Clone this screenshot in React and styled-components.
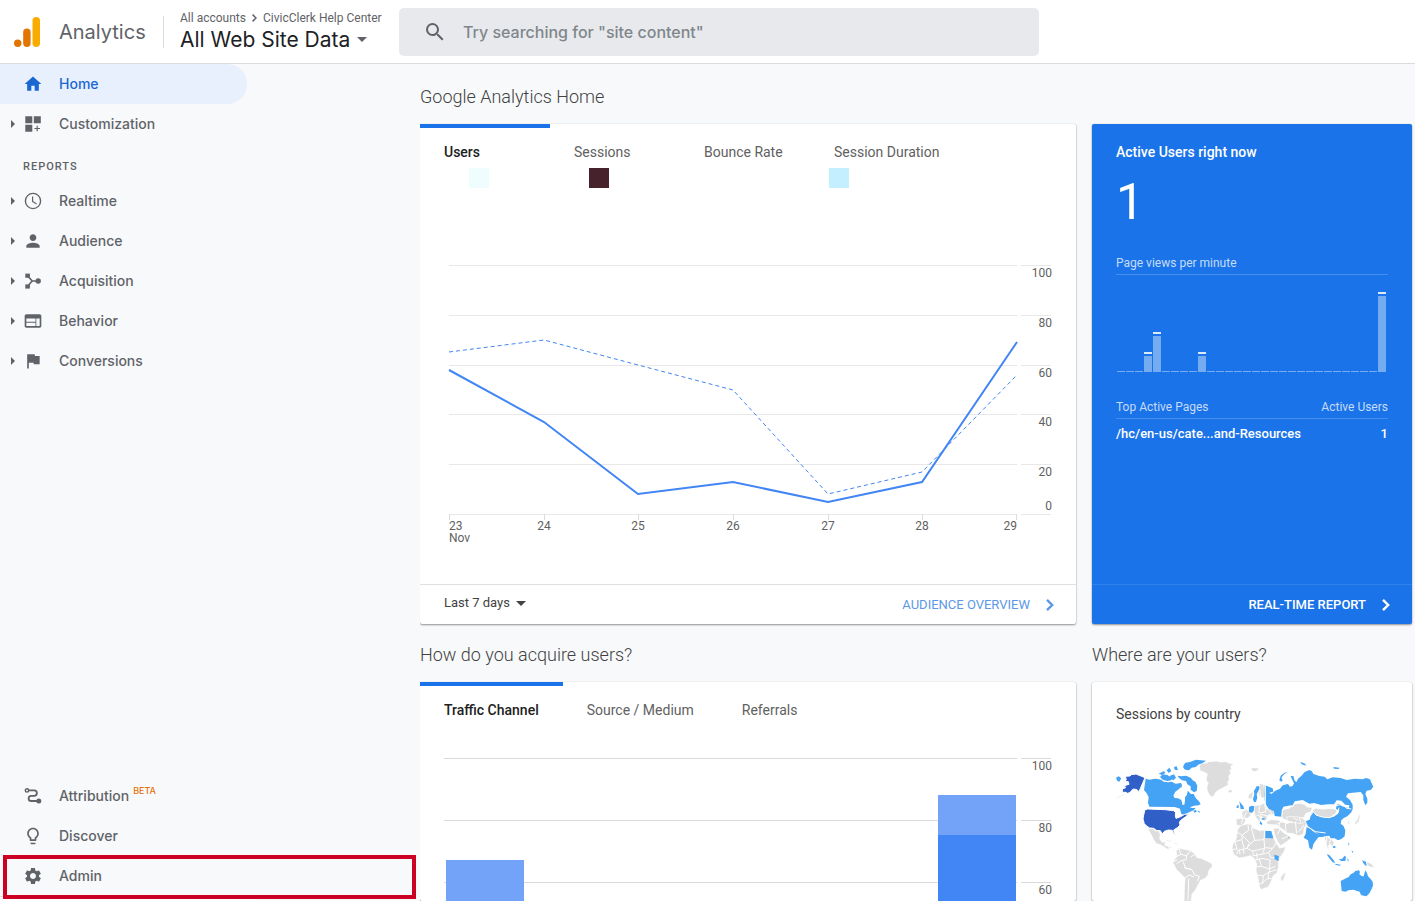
import React, { useState } from 'react';
import styled, { createGlobalStyle } from 'styled-components';
import { MdHome, MdPerson, MdFlag, MdSettings, MdWeb, MdSearch, MdLightbulbOutline } from 'react-icons/md';

const brandFont = `'Google Sans', Inter, Roboto, sans-serif`;

const LogoIcon = () => (
  <svg width="28" height="32" viewBox="0 0 28 32" aria-hidden="true">
    <rect x="18.5" y="1" width="7.5" height="30" rx="3.7" fill="#f9ab00" />
    <rect x="9.2" y="12.6" width="7.4" height="18.4" rx="3.7" fill="#e37400" />
    <circle cx="3.7" cy="27.2" r="3.7" fill="#e37400" />
  </svg>
);

const CustomizationIcon = () => (
  <svg width="20" height="20" viewBox="0 0 20 20" fill="currentColor">
    <path d="M2.3 2.3h7v6.9h-7zM10.8 2.3h7v6.9h-7zM2.3 10.7h7v7h-7zM13.6 11.7h1.2v2.2H17v1.2h-2.2v2.2h-1.2v-2.2h-2.2v-1.2h2.2z" />
  </svg>
);

const ClockIcon = () => (
  <svg width="20" height="20" viewBox="0 0 20 20" fill="none" stroke="currentColor">
    <circle cx="10" cy="10" r="7.6" strokeWidth="1.4" />
    <path d="M9.6 5.5v5l4 2.4" strokeWidth="1.2" />
  </svg>
);

const AcquisitionIcon = () => (
  <svg width="20" height="20" viewBox="0 0 20 20" fill="currentColor">
    <rect x="2.3" y="2.6" width="4.6" height="4.2" />
    <rect x="2.3" y="13.4" width="4.6" height="4.2" />
    <circle cx="15.2" cy="10" r="2.7" />
    <path d="M4.8 5l4.4 5-4.4 5M9.2 10h5" fill="none" stroke="currentColor" strokeWidth="1.6" />
  </svg>
);

const AttributionIcon = () => (
  <svg width="20" height="20" viewBox="0 0 20 20" fill="none" stroke="currentColor">
    <circle cx="4" cy="4.4" r="1.7" strokeWidth="1.5" />
    <path d="M5.8 4.4h5.4a2.7 2.7 0 0 1 0 5.4H8.2a2.6 2.6 0 0 0 0 5.2h7" strokeWidth="1.8" />
    <circle cx="15.8" cy="15" r="2.5" fill="currentColor" stroke="none" />
  </svg>
);

const Chevron = () => (
  <svg width="10" height="14" viewBox="0 0 10 14" fill="none" stroke="currentColor" strokeWidth="2.4">
    <path d="M2 1.8L7.2 7 2 12.2" />
  </svg>
);

const reports = [
  { label: 'Realtime', icon: <ClockIcon /> },
  { label: 'Audience', icon: <MdPerson /> },
  { label: 'Acquisition', icon: <AcquisitionIcon /> },
  { label: 'Behavior', icon: <MdWeb /> },
  { label: 'Conversions', icon: <MdFlag /> },
];

const swatches = ['#f0fdff', '#45222c', 'transparent', '#c4effe'];

const pageViews = Array.from({ length: 30 }, () => 0);
pageViews[3] = 16;
pageViews[4] = 36;
pageViews[9] = 16;
pageViews[29] = 76;

const days = [
  { x: 29, label: '23', anchor: 'start' },
  { x: 124, label: '24', anchor: 'middle' },
  { x: 218, label: '25', anchor: 'middle' },
  { x: 313, label: '26', anchor: 'middle' },
  { x: 408, label: '27', anchor: 'middle' },
  { x: 502, label: '28', anchor: 'middle' },
  { x: 597, label: '29', anchor: 'end' },
];

const userLines = [
  { y: 77, label: '100' },
  { y: 127, label: '80' },
  { y: 177, label: '60' },
  { y: 226, label: '40' },
  { y: 276, label: '20' },
  { y: 326, label: '0' },
];

const UsersChart = () => (
  <Chart viewBox="0 0 656 396" role="img" aria-label="Users, last 7 days">
    {userLines.map(({ y, label }) => (
      <g key={label}>
        <path d={`M29 ${y}.5H597M601 ${y}.5H631`} stroke="#e8e8e8" />
        <text x="632" y={label === '0' ? 322 : y + 12} textAnchor="end">{label}</text>
      </g>
    ))}
    {days.map(({ x, label, anchor }) => (
      <g key={label}>
        <path d={`M${anchor === 'end' ? x - 1 : x}.5 326v6`} stroke="#dcdcdc" />
        <text x={x} y="342" textAnchor={anchor}>{label}</text>
      </g>
    ))}
    <text x="29" y="354">Nov</text>
    <polyline points="29,164 124,152 218,177 313,202 408,306 502,284 597,187" fill="none" stroke="#4285f4" strokeDasharray="4 3" />
    <polyline points="29,182 124,234 218,306 313,294 408,314 502,294 597,154" fill="none" stroke="#4285f4" strokeWidth="2" />
  </Chart>
);

const TrafficChart = () => (
  <Chart viewBox="0 0 656 175" role="img" aria-label="Traffic channel">
    {[100, 80, 60].map((value, i) => (
      <g key={value}>
        <path d={`M24 ${32 + i * 62}.5H597M601 ${32 + i * 62}.5H631`} stroke="#dadada" />
        <text x="632" y={44 + i * 62} textAnchor="end">{value}</text>
      </g>
    ))}
    <rect x="26" y="134" width="78" height="41" fill="#72a3f8" />
    <rect x="518" y="69" width="78" height="40" fill="#72a3f8" />
    <rect x="518" y="109" width="78" height="66" fill="#4285f4" />
  </Chart>
);

const land = [
  // Greenland, Iceland, Svalbard
  'M298 60l10-5 12-1 6-4 24-2 10 3 18-1 8 4 16 4-10 6 3 8-6 4 4 9-7 8 2 12-5 5 2 10-17 9-12 6-9 7-5 11-8 3-8-10-5-12 0-10 4-10-7-9 2-8 2-10-10-6-12-4z',
  'M383 137l8-3 8 3-3 5-8 2z M452 70l12-2 14 2-8 8-10 2z',
  // Mexico and Central America
  'M143 250l16 1 8 7 8-1 6 11-2 14 8 10 10-2-3 11 11 3 3 11-10-5-14-9-16-6-6-9-6-12z',
  // South America
  'M228 318l10-8 14 3 18 3 13 9 8 13 12 2 18 8 15 8 1 8-10 12-3 14-8 10-14 6-8 14-8 16-10 11-4 30h-20l1-40 2-38-12-12-14-14-10-20 4-9 8-10z',
  // Europe
  'M443 160l4-12 12-8 10-14 12-10 10 2 2 14 4 20-6 7-10-2-6-10 2-12-8-6-8 10-6 24-8-4z',
  'M408 222l22-2 8 4-6 12-8 6-14-1z M426 200l14-6 10 6 2 12-10 8-14-2-2-10z',
  'M464 182l16-2 14-6 12 6 18 20-4 12-10-4-10 6 2 8-10 6-6-12-4-4-2 12 6 12-14-12-6-10-4-16z',
  'M499 230l14-6 26 2 4 8-14 6-28-2z',
  // Middle East and Central Asia
  'M541 206l6-12 22-4 4-11 24-4 16 3 8 8 16 2-4 12-16 6-6 12-18 2-20-2-14 8-12-6z',
  'M528 238l18-8 14 6 28-10 24 2 8 8-8 14-2 18-14 4-16-6-18-2-10-8z',
  'M520 250l16 0 16 14 14 8 8 8-16 12-16 10-8-10-10-22z',
  'M560 216l26-2 22 6 10 8-14 8-24-4-18-4z',
  // Korea and Japan
  'M744 222l4 10 2 8-6-4z M778 202l2 14-4 14-10 10-2-6 8-10z',
  // South-east Asia
  'M672 272l8-4 6 12 8 2 8 10-4 14-6-8-6 2 0 14 8 10-6-2-6-14-6-20z',
  'M800 350l14 6 10 12-12-2-10-4z',
  // Africa
  'M413 253l10-12 20-4 12 2 2 10 14 4 6 4 16-2 20 4 6 16 10 20 10 14 18-4-4 14-14 20-4 12 0 18-4 14-12 10-6 18-8 14-22 9-5-10-4-26-6-22 2-20-8-16-10-8-16 4-18 3-16-10-6-16 2-14 10-16z',
  'M557 380l-2 12-6 16-6-1-1-10 6-8z',
];

const borders = [
  'M412 262l14 8 0 14-22 6-16 8M426 270l20-14-2-16M426 270l26 26 12-10-10-38M464 286l28-2 2-28M492 284l2 24 24 2 10-16M452 296l-12 14-26 6-4 12M440 310l18 8 36-8M458 318l2 14 26-4 8-18M486 328l20-6 12-12M506 322l6 16 24 2M464 346l22-6 26 6M478 342l6 22 24 8 18-8M464 366l20-2M466 390l24 2 16-10 24-8M490 392l-2 22-14 4M488 414l12-12 14-2M506 382l-2 20M404 290l8 22M426 286l6 24M446 296l-4 14M412 312l-18 2M418 314l2 14M430 312l2 14M510 346l-2 36M470 324l2 20',
  'M238 312l4 16 18 4 10-14M242 328l-18 10M260 332l-2 12-16 4-12 8M254 368l22 6 8 16 14 4-6 14M254 400l14-10 14 6M266 400l-2 66M276 374l-20-4-6-20M284 328l-12 8M222 350l10-6',
  'M480 182l-4 20M494 176l4 24-22 4M498 190l22-2M480 208l20 4M440 200l-8 16M478 120l4 40M486 216l-16-6M556 236l2 24M586 230l4 36M612 240l-16 20M540 230l-4 16M580 218l14 8M598 216l4 16M540 252l-8 16M545 282l18-8M560 228l20 6M692 282l-4 14M680 272l0 20M428 222l-4 14',
];

const activeLand = [
  // Canada
  'M137 101l12 3 10-2 10-1 14 3 8 6 14 2 10-2 12 6 16-2 3 8-8 9-12 9-6 12 4 7 10 1 10 5 4 15 5-1 2-12 0-10 6-8 2-12 10 10 8 0 4 8 4 6 8 8 5 8-6 4-14 1-13 5 8 2 10 0-6 7-12 5-17 8-8-2-4-16-16-5-76-1-4-12 2-16-6-12-8-10z',
  'M180 96l8-8 14 2 10 6 2 10-12 2-14-4z M210 92l12-4 6 10-8 8-8-4z M232 92l12 2 14-2 14 6 6 8 8 4 6 12-2 16-8 4-10-8 0-10-10-6-4-10-12-2-8-6z',
  'M250 62l6-9 14-2 18-7 30 3-11 8-10 3-10 8-12 2-8 8-12-2-5-6z M200 76l8-8 6 10-8 6z M222 66l8-2 4 12-10-2z M236 116l10 4-2 8-8-4z M280 198l8-4 2 6-6 3z M292 196l9 4-4 3z',
  'M176 86l16-8 4 6-10 6z M48 98l8-4 8 6-6 10-6-2z',
  // Russia
  'M494 120l14 6 10 4 2 10-12 3 6 4 12-10 14-6 8-10 16-4 6 8 8-2 4-8-6-12-4-10 8 0 4 14 6 4 4-10 10-8 10-12 14-6 8 4 4 8 18 6 16 2 8 8 16-6 24 2 18 6 24-4 24 2 10-4 12 4 6 14 4 8-8 10-12 2-4 10 6 14 0 12-6 8-6-16 0-14-8-10-24 2-14 2-6 10 12 10 8 14 0 14-8 12-4-8 2-16-12-2-12-12-14-1-8 12-18 0-20 2-22-6-14 2-20-11-24 4-4 10-30 6-4 10-1 20-21-2-2-14-16-8-10-16-2-10z',
  'M538 106l4-14 10-8 12-4-12 8-8 10 4 8-4 4z M601 50l14 6 4 6-14-4z M700 66l18 2-2 4-14-1z',
  // China
  'M617 228l12-4 4-16 9-12 8 6 10 10 20 6 20-2 14-10 4-10-10-4 2-12 6-4 10 8 16 4 14 4-2 10-12 12-12 6-6 6-2 10 8 6 6 14-2 18-10 8-10 4-10-6-12 0-4-8-18 2-18-6-10-10-10-8-8-6z',
  // India
  'M620 246l10 4 8 8 12 8 10 4 12-8 4 2-6 12-14 0-8 10-8 12-4 16-8-6-4-22-13-8 6-12z',
  // Scandinavia, UK, Germany, Greece
  'M459 162l4-14-1-10 8-14 8 0 0 8-8 16 2 10-4 12-6 2z M418 168l4 6 8 10 2 8-10 0-2-12z M410 182l6-2 0 8-6 2z M447 186l8-4 8 2-2 14-6 6-8-4z M485 220l10 0-2 4-8 0z M481 228l6 8-2 4-6-4z',
  // Egypt and Kenya
  'M496 258l18 0 6 22-24-1z M523 329l13 4 0 15-12-5z',
  // South-east Asia
  'M680 328l8 2 12 14 6 10-8-2-10-12z M716 342l10 0 8-10 4 4-2 12-12 0z M698 304l8-1 0 6-6 0z M706 356l16 3-2 3-14-3z M786 346l12 4 2 14-8-6z M744 290l4 8-2 4z M754 316l6 4-2 4z M742 340l4 4-2 8z M566 275l4 3-4 2z',
  // Australia
  'M722 408l16-8 8-4 6-8 8-4 6-6 10-2 4 4-2 8 8 6 5 0 5-18 5 8 3 10 8 8 6 8 1 12-6 14-6 10-8 8-8-2-8-2-4-10-8-2-10-4-16 2-8 4-12-2z',
];

const mongolia = 'M636 195l12-6 20 3 20-2 16 2 8 4-6 12-18 10-22-2-18-6z';

const topLand = [
  'M76 94l14-1 4-4 14-2 27 11-18 42-6-6-10-2-6 4-4 6-8 3-6-3-10 0 0-10 10-4-4-6 14-4-2-8-10-2 4-4z',
  'M135 194l8-2 52 2 26 3 6 6-1 10 2 7 14-5 12-7 12-1-10 9-12 8-6 8 2 8-8 8-11 7 4 14-3 1-5-14-12-1-12 4-6 8-6-10-12-1-8-6-12-1-8-5-8-8-4-14 2-12z',
];

const WorldMap = () => (
  <MapDrawing viewBox="48 0 816 468" role="img" aria-label="Sessions by country">
    <g stroke="#fff" strokeWidth="2" strokeLinejoin="round">
      {land.map((d) => <path key={d} d={d} fill="#ddd" />)}
      {borders.map((d) => <path key={d} d={d} fill="none" strokeWidth="3" />)}
      {activeLand.map((d) => <path key={d} d={d} fill="#44a3f5" stroke="none" />)}
      <path d="M496 120v60l10 16 18 20M545 218l2-24 32-10 4-10 26-4 28 14M708 182l18-4 14 12 14 2M617 228l16-18 10-14 20 16 24 6 26-14 4-16M617 242l30 18 30 4" fill="none" strokeWidth="3" />
      <path d={mongolia} fill="#ddd" strokeWidth="3" />
      {topLand.map((d) => <path key={d} d={d} fill="#2f5fc7" strokeWidth="3" />)}
    </g>
    <path d="M50 159l10-4 12-7M200 286l16 4M222 294l10 2M205 306l10 2M850 380l4 4" fill="none" stroke="#e3e8ef" strokeWidth="2" />
  </MapDrawing>
);

const Tabs = ({ items }) => {
  const [active, setActive] = useState(items[0]);
  return (
    <TabBar role="tablist">
      {items.map((item) => (
        <Tab key={item} role="tab" aria-selected={item === active} $active={item === active} onClick={() => setActive(item)}>
          {item}
        </Tab>
      ))}
    </TabBar>
  );
};

const NavItem = ({ icon, label, expandable, active, badge }) => (
  <NavLink href="#" $active={active}>
    <Expander>{expandable && <ExpandArrow />}</Expander>
    <NavIcon>{icon}</NavIcon>
    <NavLabel>{label}</NavLabel>
    {badge && <Badge>{badge}</Badge>}
  </NavLink>
);

const App = () => (
  <Page>
    <GlobalStyle />
    <Header>
      <Brand href="#">
        <LogoIcon />
        Analytics
      </Brand>
      <Account>
        <Crumbs>
          All accounts
          <svg width="5" height="8" viewBox="0 0 5 8" fill="none" stroke="currentColor" strokeWidth="1.5">
            <path d="M.6.6L4 4 .6 7.4" />
          </svg>
          CivicClerk Help Center
        </Crumbs>
        <ViewPicker>
          All Web Site Data
          <DownArrow />
        </ViewPicker>
      </Account>
      <Search>
        <MdSearch />
        <SearchInput type="text" aria-label="Search" placeholder={'Try searching for "site content"'} />
      </Search>
    </Header>
    <Body>
      <Sidebar>
        <NavItem icon={<MdHome />} label="Home" active />
        <NavItem icon={<CustomizationIcon />} label="Customization" expandable />
        <NavHeading>REPORTS</NavHeading>
        {reports.map((item) => (
          <NavItem key={item.label} expandable {...item} />
        ))}
        <Spacer />
        <NavItem icon={<AttributionIcon />} label="Attribution" badge="BETA" />
        <NavItem icon={<MdLightbulbOutline />} label="Discover" />
        <Highlighted>
          <NavItem icon={<MdSettings />} label="Admin" />
        </Highlighted>
        <CollapseBar />
      </Sidebar>
      <Main>
        <Section>
          <SectionTitle>Google Analytics Home</SectionTitle>
          <Card>
            <Tabs items={['Users', 'Sessions', 'Bounce Rate', 'Session Duration']} />
            <Swatches>
              {swatches.map((color) => <Swatch key={color} $color={color} />)}
            </Swatches>
            <UsersChart />
            <CardFooter>
              <RangeSelect>
                <select aria-label="Date range" defaultValue="Last 7 days">
                  <option>Last 7 days</option>
                </select>
                <DownArrow $dark />
              </RangeSelect>
              <FooterLink href="#">
                AUDIENCE OVERVIEW
                <Chevron />
              </FooterLink>
            </CardFooter>
          </Card>
        </Section>
        <Section>
          <SectionTitle>&nbsp;</SectionTitle>
          <Card $blue>
            <Realtime>
              <RealtimeTitle>Active Users right now</RealtimeTitle>
              <BigNumber>1</BigNumber>
              <SmallTitle>Page views per minute</SmallTitle>
              <Bars>
                {pageViews.map((value, i) => <Bar key={i} $height={value} />)}
              </Bars>
              <PagesTable>
                <thead>
                  <tr>
                    <th scope="col">Top Active Pages</th>
                    <th scope="col">Active Users</th>
                  </tr>
                </thead>
                <tbody>
                  <tr>
                    <td>/hc/en-us/cate...and-Resources</td>
                    <td>1</td>
                  </tr>
                </tbody>
              </PagesTable>
            </Realtime>
            <CardFooter $blue>
              <FooterLink href="#" $blue>
                REAL-TIME REPORT
                <Chevron />
              </FooterLink>
            </CardFooter>
          </Card>
        </Section>
        <Section>
          <SectionTitle>How do you acquire users?</SectionTitle>
          <Card>
            <Tabs items={['Traffic Channel', 'Source / Medium', 'Referrals']} />
            <TrafficChart />
          </Card>
        </Section>
        <Section>
          <SectionTitle>Where are your users?</SectionTitle>
          <Card>
            <MapTitle>Sessions by country</MapTitle>
            <WorldMap />
          </Card>
        </Section>
      </Main>
    </Body>
  </Page>
);
export default App;

const GlobalStyle = createGlobalStyle`
  * {
    box-sizing: border-box;
  }
  body {
    margin: 0;
    font-family: Roboto, sans-serif;
    background-color: #f8f9fb;
  }
  button, input, select {
    font: inherit;
    border: none;
    background: none;
    padding: 0;
  }
`;

const Page = styled.div`
  display: flex;
  flex-direction: column;
  height: 100vh;
`;

const Header = styled.header`
  display: flex;
  align-items: center;
  flex: 0 0 64px;
  padding-left: 14px;
  background-color: #fff;
  border-bottom: 1px solid #dadce0;
`;

const Brand = styled.a`
  display: flex;
  align-items: center;
  gap: 17px;
  width: 150px;
  height: 32px;
  border-right: 1px solid #dadce0;
  color: #5f6368;
  font-family: ${brandFont};
  font-size: 20px;
  text-decoration: none;
`;

const Account = styled.div`
  width: 235px;
  padding-left: 16px;
`;

const Crumbs = styled.div`
  display: flex;
  align-items: center;
  gap: 6px;
  color: #5f6368;
  font-size: 12px;
  line-height: 16px;
  white-space: nowrap;
`;

const ViewPicker = styled.button`
  display: flex;
  align-items: center;
  gap: 7px;
  color: #202124;
  font-family: ${brandFont};
  font-size: 21px;
  line-height: 28px;
  white-space: nowrap;
  cursor: pointer;
`;

const DownArrow = styled.span`
  border: 5px solid transparent;
  border-top-color: ${(props) => (props.$dark ? '#424242' : '#5f6368')};
  border-bottom: none;
`;

const Search = styled.label`
  display: flex;
  align-items: center;
  flex: 0 1 640px;
  height: 48px;
  padding: 0 24px;
  gap: 16px;
  border-radius: 5px;
  background-color: #e8e9ed;
  color: #5f6368;
  svg {
    width: 24px;
    height: 24px;
    flex: none;
  }
`;

const SearchInput = styled.input`
  flex: 1;
  outline: none;
  font-family: ${brandFont};
  font-size: 16px;
  font-weight: 500;
  &::placeholder {
    color: #80868b;
    opacity: 1;
  }
`;

const Body = styled.div`
  display: flex;
  flex: 1;
  min-height: 0;
`;

const Sidebar = styled.nav`
  display: flex;
  flex-direction: column;
  flex: 0 0 420px;
`;

const NavLink = styled.a`
  display: flex;
  align-items: center;
  flex: none;
  width: 247px;
  height: 40px;
  border-radius: 0 20px 20px 0;
  background-color: ${(props) => (props.$active ? '#e8f0fe' : 'transparent')};
  color: ${(props) => (props.$active ? '#1967d2' : '#5f6368')};
  font-family: ${brandFont};
  font-size: 14px;
  font-weight: 500;
  text-decoration: none;
`;

const Expander = styled.span`
  width: 23px;
  padding-left: 11px;
`;

const ExpandArrow = styled.span`
  display: block;
  width: 4px;
  border: 4px solid transparent;
  border-left-color: #5f6368;
  border-right: none;
`;

const NavIcon = styled.span`
  display: flex;
  width: 36px;
  svg {
    width: 20px;
    height: 20px;
  }
`;

const NavLabel = styled.span`
  line-height: 20px;
`;

const Badge = styled.sup`
  align-self: flex-start;
  margin: 9px 0 0 4px;
  color: #e8710a;
  font-size: 9px;
  line-height: 12px;
`;

const NavHeading = styled.h2`
  margin: 0;
  padding: 15px 0 6px 23px;
  color: #5f6368;
  font-size: 11px;
  font-weight: 500;
  line-height: 16px;
  letter-spacing: 1px;
`;

const Spacer = styled.div`
  flex: 1;
`;

const Highlighted = styled.div`
  position: relative;
  &::after {
    content: '';
    position: absolute;
    inset: -1px 4px -3px 3px;
    border: 4px solid #cc0022;
    pointer-events: none;
  }
`;

const CollapseBar = styled.div`
  width: 256px;
  height: 5px;
  border-top: 1px solid #e0e0e0;
  background-color: #fff;
`;

const Main = styled.main`
  display: grid;
  flex: 1;
  grid-template-columns: 41fr 20fr;
  column-gap: 16px;
  align-content: start;
  padding: 2px 3px 0 0;
  overflow-y: auto;
  scrollbar-width: none;
`;

const Section = styled.section`
  display: flex;
  flex-direction: column;
  min-width: 0;
`;

const SectionTitle = styled.h2`
  margin: 0;
  padding: 19px 0 15px;
  color: #424242;
  font-size: 18px;
  font-weight: 300;
  line-height: 24px;
`;

const Card = styled.div`
  display: flex;
  flex-direction: column;
  flex: 1;
  border-radius: 2px;
  background-color: ${(props) => (props.$blue ? '#1a73e8' : '#fff')};
  box-shadow: 0 1px 2px rgba(0, 0, 0, 0.4), 0 0 1px rgba(0, 0, 0, 0.2);
`;

const TabBar = styled.div`
  display: flex;
  height: 44px;
`;

const Tab = styled.button`
  min-width: 130px;
  padding: 0 24px 5px;
  padding-top: ${(props) => (props.$active ? '13px' : '17px')};
  border-top: ${(props) => (props.$active ? '4px solid #1a73e8' : 'none')};
  color: ${(props) => (props.$active ? '#212121' : '#616161')};
  font-size: 14px;
  font-weight: ${(props) => (props.$active ? 500 : 400)};
  text-align: left;
  white-space: nowrap;
  cursor: pointer;
`;

const Swatches = styled.div`
  display: grid;
  grid-template-columns: repeat(4, 120px);
  padding-left: 49px;
`;

const Swatch = styled.span`
  width: 20px;
  height: 20px;
  background-color: ${(props) => props.$color};
`;

const Chart = styled.svg`
  display: block;
  width: 100%;
  text {
    fill: #616161;
    font-family: Roboto, sans-serif;
    font-size: 12px;
  }
`;

const CardFooter = styled.footer`
  display: flex;
  align-items: center;
  height: 40px;
  margin-top: auto;
  padding: 0 21px 0 24px;
  border-top: 1px solid ${(props) => (props.$blue ? 'rgba(255, 255, 255, 0.1)' : '#e0e0e0')};
`;

const RangeSelect = styled.span`
  display: flex;
  align-items: center;
  padding-bottom: 3px;
  gap: 6px;
  select {
    appearance: none;
    color: #424242;
    font-size: 13px;
    line-height: 16px;
  }
`;

const FooterLink = styled.a`
  display: flex;
  align-items: center;
  gap: 15px;
  margin-left: auto;
  color: ${(props) => (props.$blue ? '#fff' : '#5c98e6')};
  font-size: 13px;
  font-weight: ${(props) => (props.$blue ? 500 : 400)};
  text-decoration: none;
`;

const Realtime = styled.div`
  padding: 20px 24px;
`;

const RealtimeTitle = styled.h3`
  margin: 0;
  color: #fff;
  font-size: 14px;
  font-weight: 500;
  line-height: 16px;
`;

const BigNumber = styled.div`
  padding: 12px 0 23px;
  color: #fff;
  font-size: 50px;
  font-weight: 400;
  line-height: 60px;
`;

const SmallTitle = styled.h4`
  margin: 0;
  padding-bottom: 3px;
  border-bottom: 1px solid rgba(255, 255, 255, 0.2);
  color: rgba(255, 255, 255, 0.75);
  font-size: 12px;
  font-weight: 400;
  line-height: 16px;
`;

const Bars = styled.div`
  display: flex;
  align-items: flex-end;
  gap: 1px;
  height: 97px;
  padding: 0 2px 0 1px;
`;

const Bar = styled.span`
  position: relative;
  flex: 1;
  height: ${(props) => props.$height || 1}px;
  background-color: rgba(255, 255, 255, 0.4);
  &::before {
    content: '';
    display: ${(props) => (props.$height ? 'block' : 'none')};
    position: absolute;
    top: -4px;
    width: 100%;
    height: 2px;
    background-color: rgba(255, 255, 255, 0.85);
  }
`;

const PagesTable = styled.table`
  width: 100%;
  margin-top: 27px;
  border-collapse: collapse;
  color: #fff;
  font-size: 12px;
  line-height: 16px;
  th {
    padding: 0 0 3px;
    border-bottom: 1px solid rgba(255, 255, 255, 0.1);
    color: rgba(255, 255, 255, 0.75);
    font-weight: 400;
    text-align: left;
  }
  td {
    padding: 7px 0;
    font-size: 13px;
    font-weight: 500;
  }
  th:last-child, td:last-child {
    text-align: right;
  }
`;

const MapTitle = styled.h3`
  margin: 0;
  padding: 24px 24px 23px;
  color: #424242;
  font-size: 14px;
  font-weight: 400;
  line-height: 16px;
`;

const MapDrawing = styled.svg`
  display: block;
  margin: 0 24px;
`;
